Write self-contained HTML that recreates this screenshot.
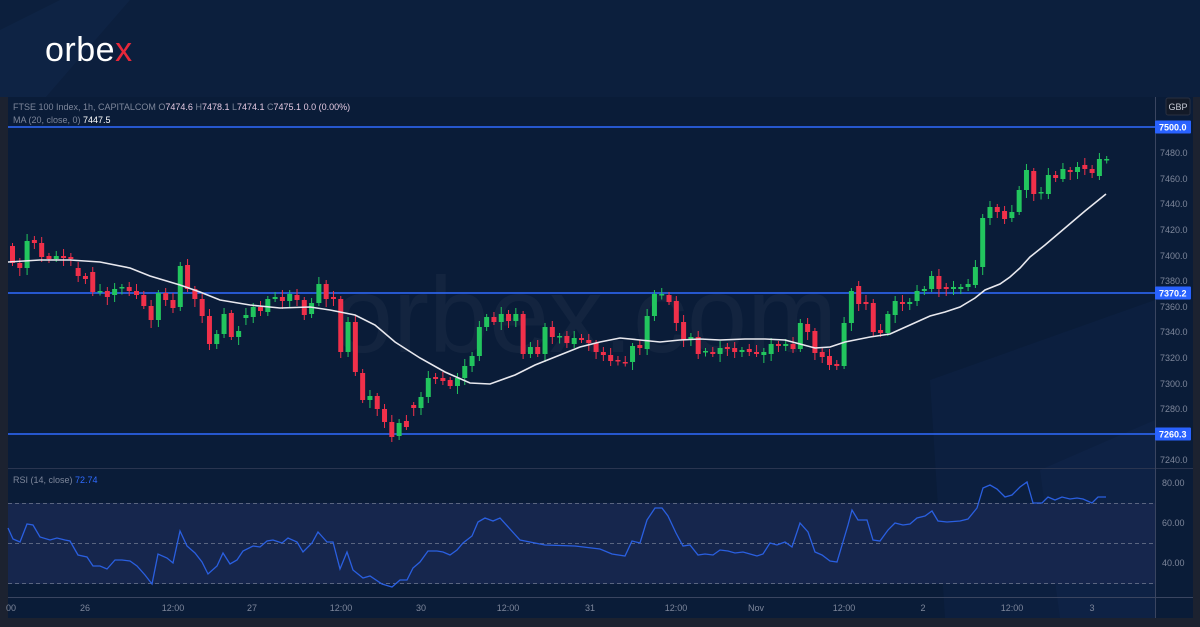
<!DOCTYPE html>
<html><head><meta charset="utf-8"><style>
html,body{margin:0;padding:0}
body{width:1200px;height:627px;overflow:hidden;background:#0c1f3d;font-family:"Liberation Sans",sans-serif;position:relative}
svg{position:absolute;left:0;top:0}
</style></head><body>
<svg id="s" width="1200" height="627" viewBox="0 0 1200 627" xmlns="http://www.w3.org/2000/svg" font-family="Liberation Sans, sans-serif">
<rect width="1200" height="627" fill="#0c1f3d"/>
<polygon points="0,30 60,0 130,0 0,150" fill="#10264a" opacity="0.6"/>
<rect x="0" y="97" width="1200" height="530" fill="#1c2230"/>
<rect x="8" y="97" width="1147" height="521" fill="#0a1c38"/>
<rect x="1155" y="97" width="38" height="521" fill="#0a1c38"/>
<polygon points="930,380 1155,300 1155,618 945,618" fill="#0d2141" opacity="0.8"/>
<polygon points="1040,470 1155,420 1155,618 1060,618" fill="#10254a" opacity="0.6"/>
<text x="585" y="352" font-size="108" fill="#ffffff" fill-opacity="0.04" text-anchor="middle" font-weight="300">orbex.com</text>
<line x1="8" y1="468.5" x2="1193" y2="468.5" stroke="#2a3550" stroke-width="1"/>
<line x1="8" y1="597.5" x2="1193" y2="597.5" stroke="#3a4560" stroke-width="1"/>
<line x1="1155.5" y1="97" x2="1155.5" y2="618" stroke="#3a4560" stroke-width="1"/>
<rect x="8" y="503" width="1147" height="81" fill="#16264d"/>
<g stroke="#5a6580" stroke-dasharray="4,3" stroke-width="1">
<line x1="8" y1="503.5" x2="1155" y2="503.5"/><line x1="8" y1="543.5" x2="1155" y2="543.5"/><line x1="8" y1="583.5" x2="1155" y2="583.5"/></g>
<g stroke="#2f6bff" stroke-width="1.5">
<line x1="8" y1="127" x2="1155" y2="127"/><line x1="8" y1="293" x2="1155" y2="293"/><line x1="8" y1="434" x2="1155" y2="434"/></g>
<g id="c"></g>
<polyline id="ma" fill="none" stroke="#e8e8ee" stroke-width="1.6"/>
<polyline id="rsi" fill="none" stroke="#2a5fe0" stroke-width="1.3"/>
<g font-size="9" fill="#7d869a">
<text x="1160" y="156">7480.0</text><text x="1160" y="182">7460.0</text><text x="1160" y="207">7440.0</text><text x="1160" y="233">7420.0</text><text x="1160" y="259">7400.0</text><text x="1160" y="284">7380.0</text><text x="1160" y="310">7360.0</text><text x="1160" y="335">7340.0</text><text x="1160" y="361">7320.0</text><text x="1160" y="387">7300.0</text><text x="1160" y="412">7280.0</text><text x="1160" y="463">7240.0</text>
<text x="1162" y="486">80.00</text><text x="1162" y="526">60.00</text><text x="1162" y="566">40.00</text>
</g>
<rect x="1166" y="98" width="24" height="17" rx="2" fill="#131a28" stroke="#2a3040"/>
<text x="1178" y="110" font-size="9" fill="#c8ccd6" text-anchor="middle">GBP</text>
<g font-size="9" fill="#fff" font-weight="bold">
<rect x="1155" y="120.5" width="36" height="13" rx="1" fill="#2962ff"/><text x="1159" y="130.5">7500.0</text>
<rect x="1155" y="286.5" width="36" height="13" rx="1" fill="#2962ff"/><text x="1159" y="296.5">7370.2</text>
<rect x="1155" y="427.5" width="36" height="13" rx="1" fill="#2962ff"/><text x="1159" y="437.5">7260.3</text>
</g>
<g font-size="9" fill="#7d869a" text-anchor="middle">
<text x="11" y="611">00</text><text x="85" y="611">26</text><text x="173" y="611">12:00</text><text x="252" y="611">27</text><text x="341" y="611">12:00</text><text x="421" y="611">30</text><text x="508" y="611">12:00</text><text x="590" y="611">31</text><text x="676" y="611">12:00</text><text x="756" y="611">Nov</text><text x="844" y="611">12:00</text><text x="923" y="611">2</text><text x="1012" y="611">12:00</text><text x="1092" y="611">3</text>
</g>
<text x="13" y="110" font-size="9" fill="#7d869a">FTSE 100 Index, 1h, CAPITALCOM <tspan>O</tspan><tspan fill="#e3c8e0">7474.6</tspan> H<tspan fill="#e3c8e0">7478.1</tspan> L<tspan fill="#e3c8e0">7474.1</tspan> C<tspan fill="#e3c8e0">7475.1</tspan> <tspan fill="#e3c8e0">0.0 (0.00%)</tspan></text>
<text x="13" y="123" font-size="9" fill="#7d869a">MA (20, close, 0) <tspan fill="#ffffff">7447.5</tspan></text>
<text x="13" y="483" font-size="9" fill="#7d869a">RSI (14, close) <tspan fill="#2f6bff">72.74</tspan></text>
<text x="45" y="61" font-size="34" fill="#ffffff" letter-spacing="0.5">orbe<tspan fill="#e8283a">x</tspan></text>
</svg>
<script>
var d=[[246,263],[263,268],[268,241],[240,243],[243,257],[256,259],[259,256],[256,258],[257,259],[268,276],[276,279],[272,292],[292,291],[291,297],[295,289],[288,287],[287,291],[291,295],[295,306],[306,320],[320,293],[293,300],[300,308],[307,266],[265,289],[289,299],[299,316],[316,344],[344,334],[334,314],[313,337],[337,331],[318,315],[317,307],[307,311],[312,299],[299,297],[297,301],[301,294],[295,300],[300,315],[314,303],[303,284],[284,299],[297,299],[299,352],[352,322],[322,372],[373,400],[400,396],[396,409],[409,422],[422,437],[436,423],[421,427],[405,408],[408,397],[397,378],[377,379],[378,381],[380,386],[386,378],[378,366],[366,356],[356,327],[327,317],[317,322],[322,314],[314,321],[321,314],[314,354],[354,347],[347,354],
[354,327],[327,337],[337,336],[336,343],[344,338],[338,340],[340,343],[343,352],[352,355],[355,361],[360,361],[362,363],[362,346],[345,348],[349,316],[316,294],[295,294],[295,302],[301,323],[322,340],[340,337],[337,354],[352,351],[352,354],[354,348],[347,349],[348,352],[352,350],[349,352],[352,354],[355,352],[354,344],[344,346],[346,344],[344,349],[349,323],[324,332],[331,353],[352,357],[356,365],[364,366],[366,323],[323,291],[286,304],[302,304],[303,332],[330,333],[333,314],[315,301],[302,304],[304,302],[301,291],[291,289],[289,276],[276,289],[287,289],[289,287],[289,287],[287,284],[285,267],[267,218],[218,207],[207,212],[211,219],[218,212],[212,190],[190,170],[171,194],[193,192],[194,175],[175,178],[179,169],[170,172],[172,167],[165,169],[169,173],[176,159],[160,159]];
var n=d.length,sp=(1106.7-12.5)/(n-1),h='';
for(var i=0;i<n;i++){var x=12.5+i*sp,o=d[i][0],c=d[i][1],up=c<o,col=up?'#22c55e':'#f0304a';
var t=Math.min(o,c),b=Math.max(o,c);if(b-t<1.5)b=t+1.5;
var w1=t-(3+(i*7%5)),w2=b+(3+(i*11%6));
h+='<line x1="'+x+'" y1="'+w1+'" x2="'+x+'" y2="'+w2+'" stroke="'+col+'" stroke-width="1"/>';
h+='<rect x="'+(x-2.5)+'" y="'+t+'" width="5" height="'+(b-t)+'" fill="'+col+'"/>';}
document.getElementById('c').innerHTML=h;
document.getElementById('ma').setAttribute('points','8,262 40,260 70,260 100,262 130,268 150,276 180,285 200,292 220,300 250,305 280,308 310,307 330,310 355,315 375,325 395,342 420,358 445,372 470,383 490,384 515,375 535,365 555,357 580,347 600,342 620,338 640,340 660,342 680,340 700,339 720,340 745,339 765,339 785,340 800,344 815,348 830,347 845,342 870,337 890,334 910,325 930,316 945,312 960,307 975,298 985,290 1000,284 1010,277 1020,268 1030,257 1045,245 1065,228 1085,211 1106,194');
document.getElementById('rsi').setAttribute('points','8,528 13,539 20,542 27,524 33,525 40,537 50,540 57,538 65,540 70,541 78,555 87,557 93,566 100,566 107,569 115,560 122,560 130,561 137,566 145,575 152,584 158,554 167,558 173,563 180,531 187,546 195,553 202,562 208,574 217,566 223,553 230,564 237,560 243,551 253,546 260,547 267,541 273,540 282,543 288,538 297,542 303,552 312,543 318,532 327,542 333,542 340,569 347,552 353,570 363,578 370,576 382,584 392,587 400,580 407,580 413,568 420,562 428,551 437,551 443,552 450,555 457,550 463,543 472,536 478,522 485,518 493,521 500,518 520,540 545,545 575,546 600,549 612,554 625,556 632,541 640,543 647,520 655,508 662,508 668,516 676,533 683,546 690,545 698,555 705,554 713,555 720,550 728,551 735,553 743,552 750,554 757,556 763,554 770,543 777,545 785,542 792,547 800,523 808,532 815,552 822,555 830,561 837,562 848,525 852,510 858,520 867,520 873,540 880,541 888,530 895,523 903,525 910,524 917,518 925,516 932,511 938,521 947,522 960,521 968,519 977,508 983,488 990,485 997,489 1005,497 1012,495 1020,487 1027,482 1033,503 1042,503 1048,497 1055,500 1062,497 1070,499 1077,498 1083,499 1092,503 1098,497 1106,497');
</script>
</body></html>
